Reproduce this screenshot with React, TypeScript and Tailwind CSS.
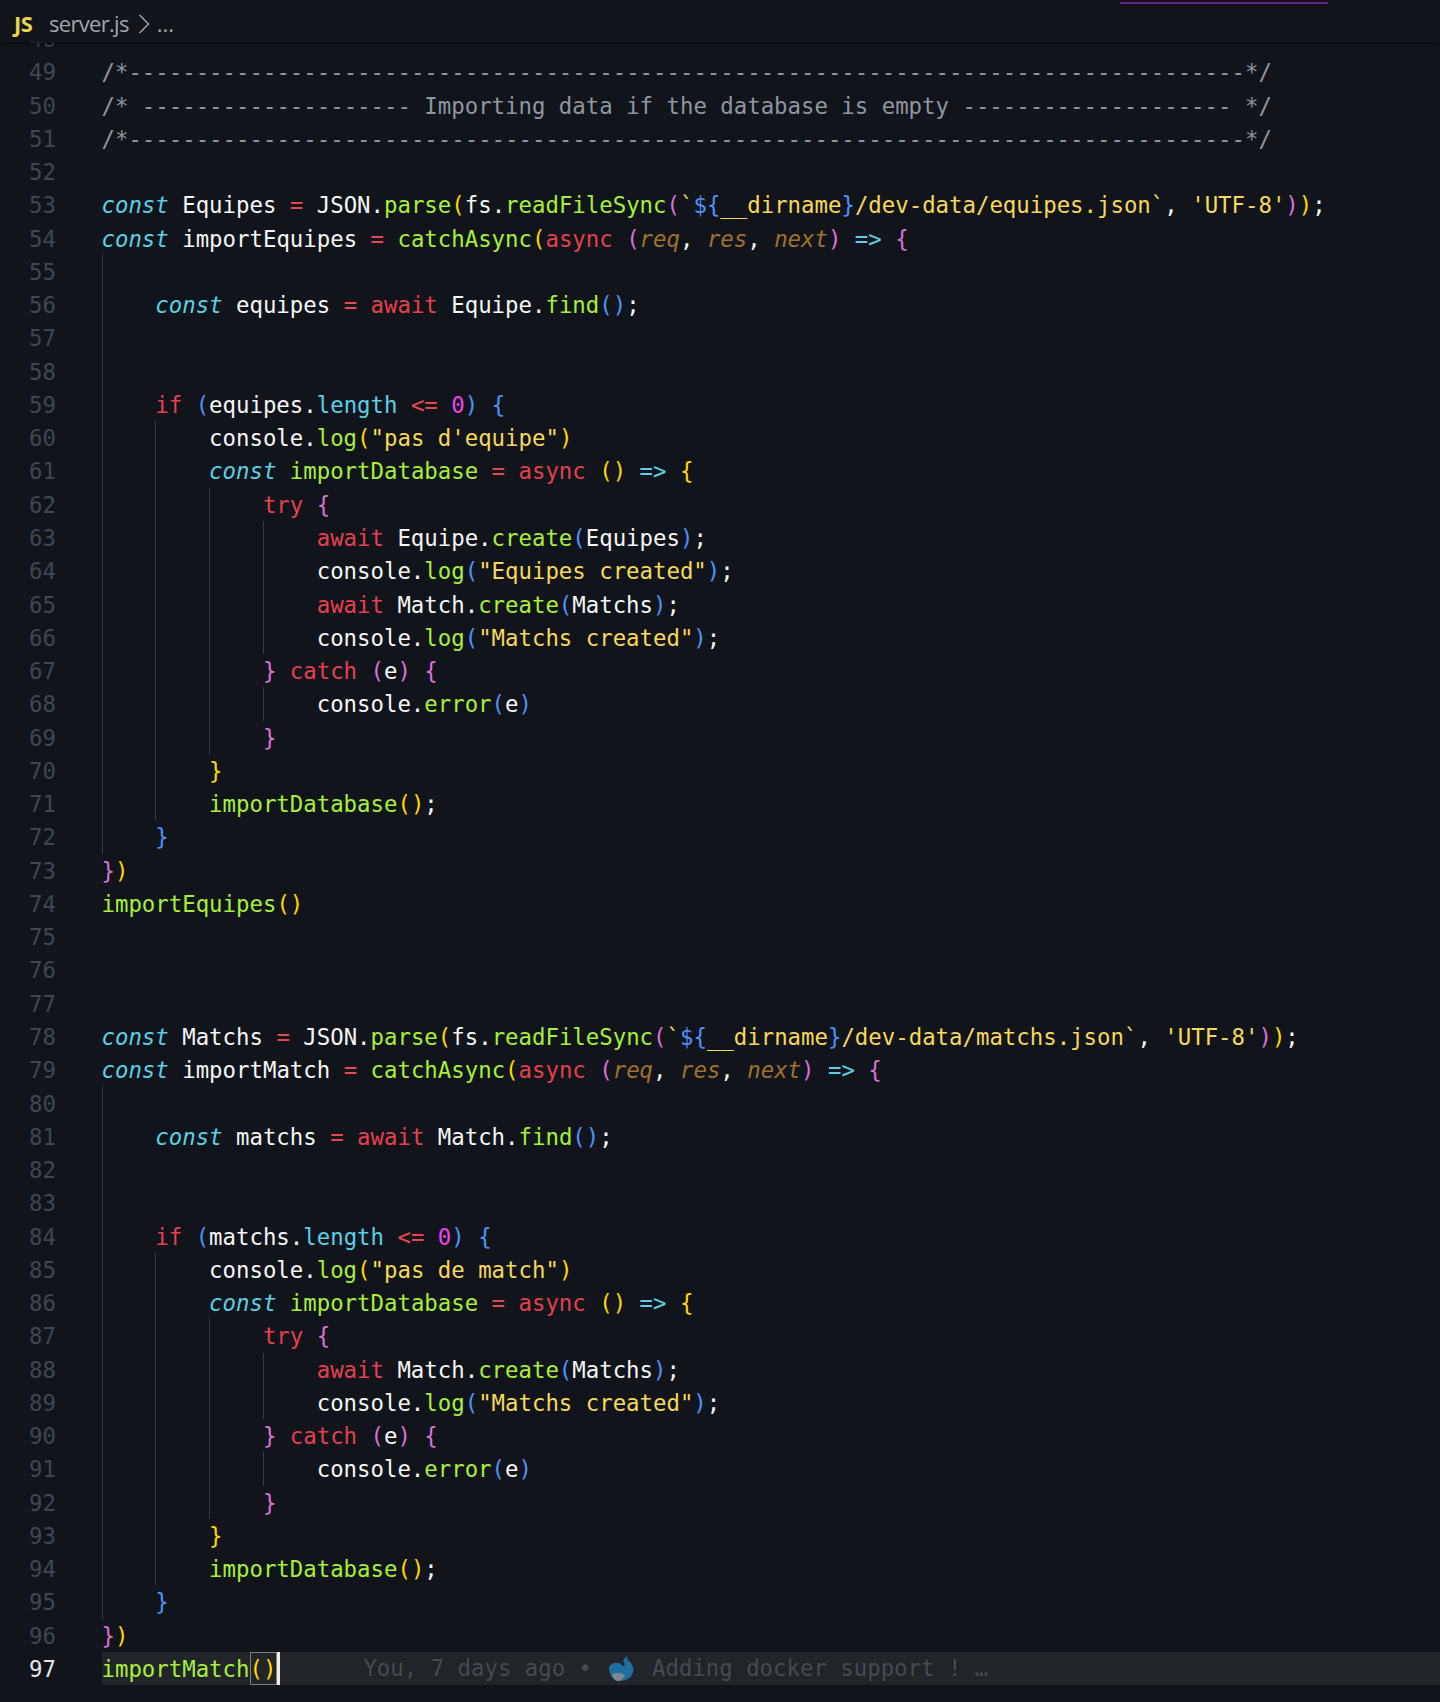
const C: Record<string, string> = {
  w: "text-[#f6f6f6]",
  m: "text-[#8f969e]",
  k: "text-[#5ccfe6] italic",
  o: "text-[#e5484d]",
  r: "text-[#e5404f]",
  f: "text-[#a6f03c]",
  s: "text-[#f7d85c]",
  g: "text-[#ffd700]",
  p: "text-[#da70d6]",
  b: "text-[#4f91fa]",
  a: "text-[#a0702f] italic",
  n: "text-[#ee44ee]",
  l: "text-[#5ccfe6]",
  t: "text-[#5ccfe6]",
};

type Tok = [string, string];
type Line = { n: number; i?: number; t?: Tok[] };

const dash = "-".repeat(83);

function readLine(name: string, file: string, n: number): Line {
  return {
    n,
    t: [
      ["const", "k"], [" " + name + " ", "w"], ["=", "o"], [" JSON.", "w"], ["parse", "f"], ["(", "g"], ["fs.", "w"], ["readFileSync", "f"], ["(", "p"],
      ["`", "s"], ["${", "b"], ["__dirname", "s"], ["}", "b"], ["/dev-data/" + file + ".json`", "s"], [", ", "w"], ["'UTF-8'", "s"], [")", "p"], [")", "g"], [";", "w"],
    ],
  };
}

function importHead(n: number, fn: string): Line {
  return { n, t: [["const", "k"], [" " + fn + " ", "w"], ["=", "o"], [" ", "w"], ["catchAsync", "f"], ["(", "g"], ["async", "r"], [" ", "w"], ["(", "p"], ["req", "a"], [", ", "w"], ["res", "a"], [", ", "w"], ["next", "a"], [")", "p"], [" ", "w"], ["=>", "t"], [" ", "w"], ["{", "p"]] };
}

const log = (s: string): Tok[] => [["console.", "w"], ["log", "f"], ["(", "b"], [`"${s}"`, "s"], [")", "b"], [";", "w"]];

const body = (start: number, v: string, model: string, msg: string, inner: Tok[][]): Line[] => {
  const L: Line[] = [];
  let n = start;
  L.push({ n: n++, i: 1 });
  L.push({ n: n++, i: 1, t: [["const", "k"], [" " + v + " ", "w"], ["=", "o"], [" ", "w"], ["await", "r"], [" " + model + ".", "w"], ["find", "f"], ["()", "b"], [";", "w"]] });
  L.push({ n: n++, i: 1 });
  L.push({ n: n++, i: 1 });
  L.push({ n: n++, i: 1, t: [["if", "r"], [" ", "w"], ["(", "b"], [v + ".", "w"], ["length", "l"], [" ", "w"], ["<=", "o"], [" ", "w"], ["0", "n"], [")", "b"], [" ", "w"], ["{", "b"]] });
  L.push({ n: n++, i: 2, t: [["console.", "w"], ["log", "f"], ["(", "g"], [`"${msg}"`, "s"], [")", "g"]] });
  L.push({ n: n++, i: 2, t: [["const", "k"], [" ", "w"], ["importDatabase", "f"], [" ", "w"], ["=", "o"], [" ", "w"], ["async", "r"], [" ", "w"], ["()", "g"], [" ", "w"], ["=>", "t"], [" ", "w"], ["{", "g"]] });
  L.push({ n: n++, i: 3, t: [["try", "r"], [" ", "w"], ["{", "p"]] });
  inner.forEach((t) => L.push({ n: n++, i: 4, t }));
  L.push({ n: n++, i: 3, t: [["}", "p"], [" ", "w"], ["catch", "r"], [" ", "w"], ["(", "p"], ["e", "w"], [")", "p"], [" ", "w"], ["{", "p"]] });
  L.push({ n: n++, i: 4, t: [["console.", "w"], ["error", "f"], ["(", "b"], ["e", "w"], [")", "b"]] });
  L.push({ n: n++, i: 3, t: [["}", "p"]] });
  L.push({ n: n++, i: 2, t: [["}", "g"]] });
  L.push({ n: n++, i: 2, t: [["importDatabase", "f"], ["()", "g"], [";", "w"]] });
  L.push({ n: n++, i: 1, t: [["}", "b"]] });
  L.push({ n: n++, t: [["}", "p"], [")", "g"]] });
  return L;
};

const createEq: Tok[] = [["await", "r"], [" Equipe.", "w"], ["create", "f"], ["(", "b"], ["Equipes", "w"], [")", "b"], [";", "w"]];
const createMa: Tok[] = [["await", "r"], [" Match.", "w"], ["create", "f"], ["(", "b"], ["Matchs", "w"], [")", "b"], [";", "w"]];

const lines: Line[] = [
  { n: 48 },
  { n: 49, t: [["/*" + dash + "*/", "m"]] },
  { n: 50, t: [["/* -------------------- Importing data if the database is empty -------------------- */", "m"]] },
  { n: 51, t: [["/*" + dash + "*/", "m"]] },
  { n: 52 },
  readLine("Equipes", "equipes", 53),
  importHead(54, "importEquipes"),
  ...body(55, "equipes", "Equipe", "pas d'equipe", [createEq, log("Equipes created"), createMa, log("Matchs created")]),
  { n: 74, t: [["importEquipes", "f"], ["()", "g"]] },
  { n: 75 },
  { n: 76 },
  { n: 77 },
  readLine("Matchs", "matchs", 78),
  importHead(79, "importMatch"),
  ...body(80, "matchs", "Match", "pas de match", [createMa, log("Matchs created")]),
];

function Row({ line }: { line: Line }) {
  return (
    <div className="flex h-[33.27px] leading-[34.4px]">
      <div className="w-[56px] shrink-0 text-right text-[#3f4651]">{line.n}</div>
      <div className="w-[45.5px] shrink-0" />
      {Array.from({ length: line.i ?? 0 }).map((_, k) => (
        <div key={k} className="w-[53.8px] shrink-0 border-l border-[#3a3d43]" />
      ))}
      <div className="whitespace-pre">
        {line.t?.map(([s, c], k) => (
          <span key={k} className={C[c]}>
            {s}
          </span>
        ))}
      </div>
    </div>
  );
}

function Whale() {
  return (
    <svg viewBox="0 0 26 26" className="h-[26px] w-[26px] shrink-0">
      <path d="M0 12C1 7 6 6 10 7c3 1 4 4 5.5 3 .5-2-.5-4-1.5-5l1-2 2.5-3 1.5 4c5 4 7 10 4 15-3 5-9 6-13 6C4 25 0 18 0 12z" fill="#1f6e9e" />
      <path d="M3 19c3-3 8-3 13 0-1 3-4 6-7 6-3 0-5-3-6-6z" fill="#7b8794" />
    </svg>
  );
}

export default function App() {
  return (
    <div className="h-[1702px] w-[1440px] overflow-hidden bg-[#11151b] font-['DejaVu_Sans_Mono',monospace] text-[22.35px]">
      <header className="relative z-10 flex h-[42px] items-center bg-[#11151b] pl-[14px] pt-[5px] font-['Open_Sans',sans-serif] shadow-[0_2px_4px_rgba(0,0,0,0.6)]">
        <span className="w-[35px] text-[22px] font-bold tracking-[-0.5px] text-[#e8d44d]">JS</span>
        <span className="text-[22px] tracking-[-0.7px] text-[#a0a5ab]">server.js</span>
        <svg viewBox="0 0 12 22" className="ml-[9px] h-[22px] w-[12px] text-[#a0a5ab]" fill="none" stroke="currentColor" strokeWidth="1.5">
          <path d="M1.5 2l9 9-9 9" />
        </svg>
        <span className="ml-[7px] text-[22px] text-[#a0a5ab]">...</span>
        <div className="absolute left-[1120px] top-[2px] h-[2px] w-[208px] bg-[#6b1f8a]" />
      </header>
      <main className="-mt-[20px]">
        {lines.map((l) => (
          <Row key={l.n} line={l} />
        ))}
        <div className="flex h-[33.27px] leading-[34.4px]">
          <div className="w-[56px] shrink-0 text-right text-[#e6e6e6]">97</div>
          <div className="w-[45.5px] shrink-0" />
          <div className="flex flex-1 bg-[#212429]">
            <div className="relative whitespace-pre">
              <span className={C.f}>importMatch</span>
              <span className={C.g}>()</span>
              <span className="absolute left-[148px] top-0 h-full w-[27px] border border-[#7d7f82]" />
              <span className="absolute left-[175px] top-0 h-full w-[3px] bg-[#f2ede2]" />
            </div>
            <div className="ml-[87px] flex items-center whitespace-pre text-[#474a50]">
              <span>You, 7 days ago • </span>
              <span className="ml-[3px]">
                <Whale />
              </span>
              <span className="ml-[4px]"> Adding docker support ! …</span>
            </div>
          </div>
        </div>
      </main>
    </div>
  );
}
